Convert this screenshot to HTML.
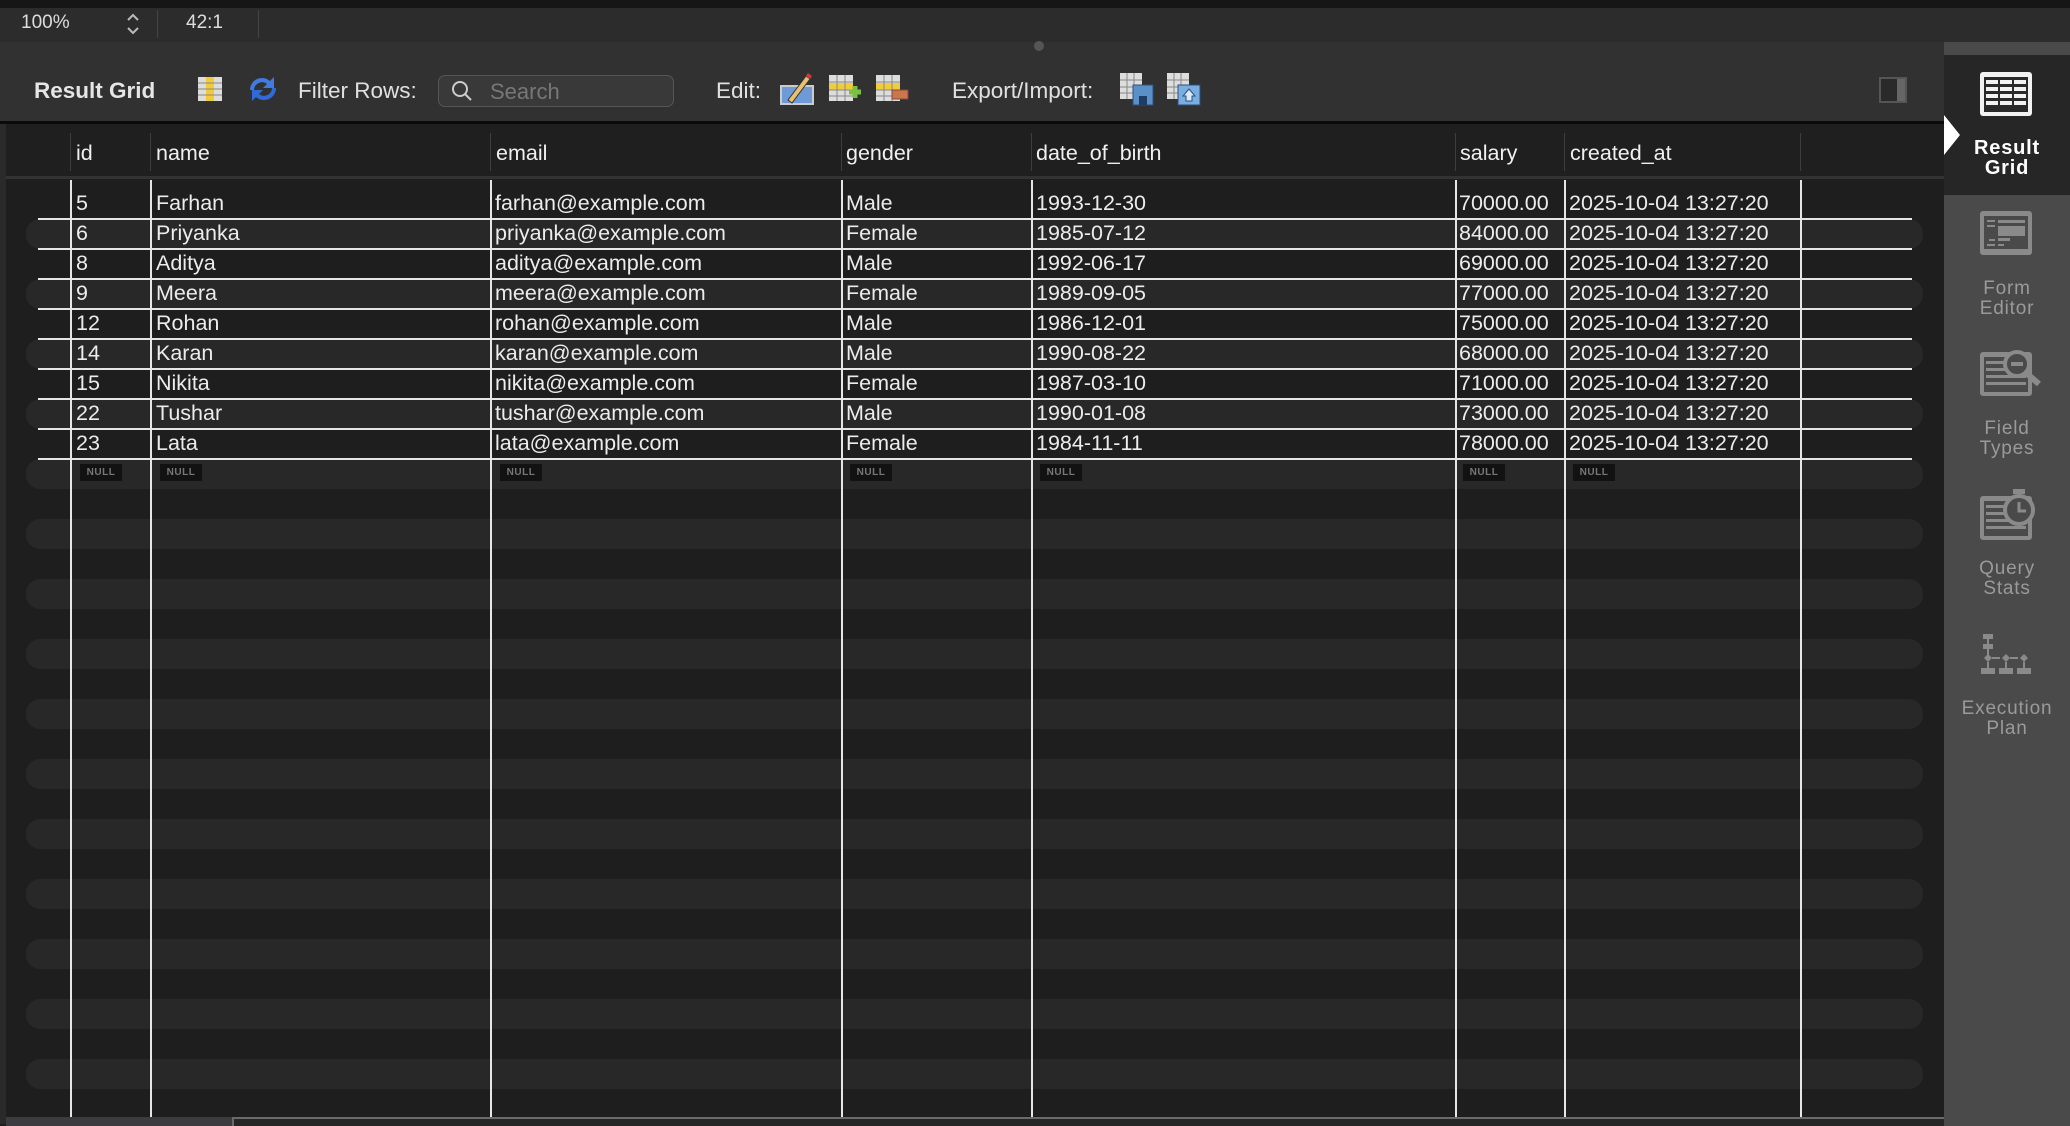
<!DOCTYPE html>
<html><head><meta charset="utf-8"><style>
*{margin:0;padding:0;box-sizing:border-box}
body{width:2070px;height:1126px;background:#1e1e1e;position:relative;overflow:hidden;font-family:"Liberation Sans",Arial,sans-serif;color:#e8e8e8}
.a{position:absolute}
.t{position:absolute;white-space:nowrap}
.cell{position:absolute;font-size:21.5px;color:#ececec;white-space:nowrap;line-height:30px}
.hd{position:absolute;font-size:21.5px;color:#f0f0f0;top:139px;line-height:28px}
.null{position:absolute;background:#121212;color:#777;font-size:10px;font-weight:bold;width:42px;height:17px;line-height:17px;text-align:center;letter-spacing:0.5px}
.lab{position:absolute;left:1944px;width:126px;text-align:center;font-size:19px;color:#9a9a9a;line-height:20px;letter-spacing:0.8px}
</style></head><body>
<div class="a" style="left:0;top:0;width:2070px;height:8px;background:#161616"></div>
<div class="a" style="left:0;top:8px;width:2070px;height:34px;background:#2c2c2c"></div>
<div class="t" style="left:21px;top:12px;font-size:19px;color:#ddd">100%</div>
<svg class="a" style="left:125px;top:11px" width="16" height="26"><path d="M3 9 L8 4 L13 9 M3 17 L8 22 L13 17" stroke="#bbb" stroke-width="2" fill="none"/></svg>
<div class="a" style="left:157px;top:10px;width:1px;height:28px;background:#444"></div>
<div class="t" style="left:186px;top:12px;font-size:19px;color:#ddd">42:1</div>
<div class="a" style="left:258px;top:10px;width:1px;height:28px;background:#444"></div>
<div class="a" style="left:0;top:42px;width:1944px;height:80px;background:#313131"></div>
<div class="a" style="left:1034px;top:41px;width:10px;height:10px;border-radius:5px;background:#555"></div>
<div class="a" style="left:0;top:121px;width:1944px;height:3px;background:#0a0a0a"></div>
<div class="t" style="left:34px;top:78px;font-size:22.5px;font-weight:bold;color:#e6e6e6">Result Grid</div>
<svg class="a" style="left:197px;top:76px" width="26" height="26"><rect x="1" y="1" width="24" height="24" fill="#ddd"/><rect x="9" y="1" width="8" height="24" fill="#f0cc3a"/><g stroke="#888" stroke-width="1"><path d="M1 7H25M1 13H25M1 19H25"/></g></svg>
<svg class="a" style="left:246px;top:74px" width="34" height="30"><path d="M4 16 A12 12 0 0 1 24 7 L28 3 L28 14 L17 14 L21 10 A8 8 0 0 0 8 16Z" fill="#3f7be0"/><path d="M30 14 A12 12 0 0 1 10 23 L6 27 L6 16 L17 16 L13 20 A8 8 0 0 0 26 14Z" fill="#2f6ad8"/></svg>
<div class="t" style="left:298px;top:78px;font-size:22.5px;color:#e0e0e0">Filter Rows:</div>
<div class="a" style="left:438px;top:75px;width:236px;height:32px;border-radius:7px;background:#393939;border:1px solid #555"></div>
<svg class="a" style="left:450px;top:79px" width="24" height="24"><circle cx="10" cy="10" r="7" stroke="#ccc" stroke-width="2" fill="none"/><path d="M15 15 L21 21" stroke="#ccc" stroke-width="2"/></svg>
<div class="t" style="left:490px;top:79px;font-size:22px;color:#777">Search</div>
<div class="t" style="left:716px;top:78px;font-size:22.5px;color:#e0e0e0">Edit:</div>
<svg class="a" style="left:780px;top:72px" width="34" height="34"><rect x="1" y="14" width="32" height="18" fill="#6e9ad8" stroke="#ccc" stroke-width="2"/><path d="M8 28 L26 4 L30 7 L12 31 Z" fill="#e8c070" stroke="#333"/><path d="M26 4 L30 7 L32 4 L28 1Z" fill="#d33"/></svg>
<svg class="a" style="left:828px;top:74px" width="34" height="30"><rect x="1" y="1" width="24" height="26" fill="#ddd"/><rect x="1" y="9" width="24" height="7" fill="#f0cc3a"/><g stroke="#888"><path d="M1 8H25M1 16H25M1 22H25M9 1V27M17 1V27"/></g><path d="M21 18H33M27 12V24" stroke="#7ac043" stroke-width="5"/></svg>
<svg class="a" style="left:875px;top:74px" width="34" height="30"><rect x="1" y="1" width="24" height="26" fill="#ddd"/><rect x="1" y="9" width="24" height="7" fill="#f0cc3a"/><g stroke="#888"><path d="M1 8H25M1 16H25M1 22H25M9 1V27M17 1V27"/></g><rect x="17" y="16" width="16" height="9" fill="#c8784a" stroke="#844"/></svg>
<div class="t" style="left:952px;top:78px;font-size:22.5px;color:#e0e0e0">Export/Import:</div>
<svg class="a" style="left:1119px;top:72px" width="36" height="34"><rect x="1" y="1" width="22" height="26" fill="#ddd"/><g stroke="#888"><path d="M1 8H23M1 15H23M1 21H23M8 1V27M15 1V27"/></g><rect x="14" y="13" width="20" height="20" fill="#5b8fc8" stroke="#2a4f80"/><rect x="20" y="24" width="8" height="9" fill="#1f3c66"/></svg>
<svg class="a" style="left:1166px;top:72px" width="36" height="34"><rect x="1" y="1" width="22" height="26" fill="#ddd"/><g stroke="#888"><path d="M1 8H23M1 15H23M1 21H23M8 1V27M15 1V27"/></g><rect x="12" y="13" width="22" height="20" fill="#7aaee0" stroke="#2a4f80"/><path d="M23 17 L29 24 H26 V29 H20 V24 H17Z" fill="#dbe9f8" stroke="#2a4f80"/></svg>
<svg class="a" style="left:1879px;top:77px" width="28" height="26"><rect x="1" y="1" width="26" height="24" fill="#2a2a2a" stroke="#555" stroke-width="2"/><rect x="18" y="2" width="8" height="22" fill="#666"/></svg>
<div class="a" style="left:6px;top:124px;width:1938px;height:54px;background:#1f1f1f"></div>
<div class="a" style="left:6px;top:176px;width:1938px;height:3px;background:#333"></div>
<div class="a" style="left:0;top:124px;width:6px;height:1000px;background:#2a2a2a"></div>
<div class="a" style="left:70px;top:133px;width:1px;height:38px;background:#3e3e3e"></div>
<div class="a" style="left:150px;top:133px;width:1px;height:38px;background:#3e3e3e"></div>
<div class="a" style="left:490px;top:133px;width:1px;height:38px;background:#3e3e3e"></div>
<div class="a" style="left:841px;top:133px;width:1px;height:38px;background:#3e3e3e"></div>
<div class="a" style="left:1031px;top:133px;width:1px;height:38px;background:#3e3e3e"></div>
<div class="a" style="left:1455px;top:133px;width:1px;height:38px;background:#3e3e3e"></div>
<div class="a" style="left:1564px;top:133px;width:1px;height:38px;background:#3e3e3e"></div>
<div class="a" style="left:1800px;top:133px;width:1px;height:38px;background:#3e3e3e"></div>
<div class="hd" style="left:76px">id</div>
<div class="hd" style="left:156px">name</div>
<div class="hd" style="left:496px">email</div>
<div class="hd" style="left:846px">gender</div>
<div class="hd" style="left:1036px">date_of_birth</div>
<div class="hd" style="left:1460px">salary</div>
<div class="hd" style="left:1570px">created_at</div>
<div class="a" style="left:26px;top:219px;width:1897px;height:30px;border-radius:14px;background:#282828"></div>
<div class="a" style="left:26px;top:279px;width:1897px;height:30px;border-radius:14px;background:#282828"></div>
<div class="a" style="left:26px;top:339px;width:1897px;height:30px;border-radius:14px;background:#282828"></div>
<div class="a" style="left:26px;top:399px;width:1897px;height:30px;border-radius:14px;background:#282828"></div>
<div class="a" style="left:26px;top:459px;width:1897px;height:30px;border-radius:14px;background:#282828"></div>
<div class="a" style="left:26px;top:519px;width:1897px;height:30px;border-radius:14px;background:#282828"></div>
<div class="a" style="left:26px;top:579px;width:1897px;height:30px;border-radius:14px;background:#282828"></div>
<div class="a" style="left:26px;top:639px;width:1897px;height:30px;border-radius:14px;background:#282828"></div>
<div class="a" style="left:26px;top:699px;width:1897px;height:30px;border-radius:14px;background:#282828"></div>
<div class="a" style="left:26px;top:759px;width:1897px;height:30px;border-radius:14px;background:#282828"></div>
<div class="a" style="left:26px;top:819px;width:1897px;height:30px;border-radius:14px;background:#282828"></div>
<div class="a" style="left:26px;top:879px;width:1897px;height:30px;border-radius:14px;background:#282828"></div>
<div class="a" style="left:26px;top:939px;width:1897px;height:30px;border-radius:14px;background:#282828"></div>
<div class="a" style="left:26px;top:999px;width:1897px;height:30px;border-radius:14px;background:#282828"></div>
<div class="a" style="left:26px;top:1059px;width:1897px;height:30px;border-radius:14px;background:#282828"></div>
<div class="a" style="left:38px;top:218px;width:1874px;height:2px;background:#e6e6e6"></div>
<div class="a" style="left:38px;top:248px;width:1874px;height:2px;background:#e6e6e6"></div>
<div class="a" style="left:38px;top:278px;width:1874px;height:2px;background:#e6e6e6"></div>
<div class="a" style="left:38px;top:308px;width:1874px;height:2px;background:#e6e6e6"></div>
<div class="a" style="left:38px;top:338px;width:1874px;height:2px;background:#e6e6e6"></div>
<div class="a" style="left:38px;top:368px;width:1874px;height:2px;background:#e6e6e6"></div>
<div class="a" style="left:38px;top:398px;width:1874px;height:2px;background:#e6e6e6"></div>
<div class="a" style="left:38px;top:428px;width:1874px;height:2px;background:#e6e6e6"></div>
<div class="a" style="left:38px;top:458px;width:1874px;height:2px;background:#e6e6e6"></div>
<div class="a" style="left:70px;top:180px;width:2px;height:937px;background:#e6e6e6"></div>
<div class="a" style="left:150px;top:180px;width:2px;height:937px;background:#e6e6e6"></div>
<div class="a" style="left:490px;top:180px;width:2px;height:937px;background:#e6e6e6"></div>
<div class="a" style="left:841px;top:180px;width:2px;height:937px;background:#e6e6e6"></div>
<div class="a" style="left:1031px;top:180px;width:2px;height:937px;background:#e6e6e6"></div>
<div class="a" style="left:1455px;top:180px;width:2px;height:937px;background:#e6e6e6"></div>
<div class="a" style="left:1564px;top:180px;width:2px;height:937px;background:#e6e6e6"></div>
<div class="a" style="left:1800px;top:180px;width:2px;height:937px;background:#e6e6e6"></div>
<div class="a" style="left:0;top:188px">
<div class="cell" style="left:76px;top:0">5</div><div class="cell" style="left:156px;top:0">Farhan</div><div class="cell" style="left:495px;top:0">farhan@example.com</div><div class="cell" style="left:846px;top:0">Male</div><div class="cell" style="left:1036px;top:0">1993-12-30</div><div class="cell" style="left:1459px;top:0">70000.00</div><div class="cell" style="left:1569px;top:0">2025-10-04 13:27:20</div>
<div class="cell" style="left:76px;top:30px">6</div><div class="cell" style="left:156px;top:30px">Priyanka</div><div class="cell" style="left:495px;top:30px">priyanka@example.com</div><div class="cell" style="left:846px;top:30px">Female</div><div class="cell" style="left:1036px;top:30px">1985-07-12</div><div class="cell" style="left:1459px;top:30px">84000.00</div><div class="cell" style="left:1569px;top:30px">2025-10-04 13:27:20</div>
<div class="cell" style="left:76px;top:60px">8</div><div class="cell" style="left:156px;top:60px">Aditya</div><div class="cell" style="left:495px;top:60px">aditya@example.com</div><div class="cell" style="left:846px;top:60px">Male</div><div class="cell" style="left:1036px;top:60px">1992-06-17</div><div class="cell" style="left:1459px;top:60px">69000.00</div><div class="cell" style="left:1569px;top:60px">2025-10-04 13:27:20</div>
<div class="cell" style="left:76px;top:90px">9</div><div class="cell" style="left:156px;top:90px">Meera</div><div class="cell" style="left:495px;top:90px">meera@example.com</div><div class="cell" style="left:846px;top:90px">Female</div><div class="cell" style="left:1036px;top:90px">1989-09-05</div><div class="cell" style="left:1459px;top:90px">77000.00</div><div class="cell" style="left:1569px;top:90px">2025-10-04 13:27:20</div>
<div class="cell" style="left:76px;top:120px">12</div><div class="cell" style="left:156px;top:120px">Rohan</div><div class="cell" style="left:495px;top:120px">rohan@example.com</div><div class="cell" style="left:846px;top:120px">Male</div><div class="cell" style="left:1036px;top:120px">1986-12-01</div><div class="cell" style="left:1459px;top:120px">75000.00</div><div class="cell" style="left:1569px;top:120px">2025-10-04 13:27:20</div>
<div class="cell" style="left:76px;top:150px">14</div><div class="cell" style="left:156px;top:150px">Karan</div><div class="cell" style="left:495px;top:150px">karan@example.com</div><div class="cell" style="left:846px;top:150px">Male</div><div class="cell" style="left:1036px;top:150px">1990-08-22</div><div class="cell" style="left:1459px;top:150px">68000.00</div><div class="cell" style="left:1569px;top:150px">2025-10-04 13:27:20</div>
<div class="cell" style="left:76px;top:180px">15</div><div class="cell" style="left:156px;top:180px">Nikita</div><div class="cell" style="left:495px;top:180px">nikita@example.com</div><div class="cell" style="left:846px;top:180px">Female</div><div class="cell" style="left:1036px;top:180px">1987-03-10</div><div class="cell" style="left:1459px;top:180px">71000.00</div><div class="cell" style="left:1569px;top:180px">2025-10-04 13:27:20</div>
<div class="cell" style="left:76px;top:210px">22</div><div class="cell" style="left:156px;top:210px">Tushar</div><div class="cell" style="left:495px;top:210px">tushar@example.com</div><div class="cell" style="left:846px;top:210px">Male</div><div class="cell" style="left:1036px;top:210px">1990-01-08</div><div class="cell" style="left:1459px;top:210px">73000.00</div><div class="cell" style="left:1569px;top:210px">2025-10-04 13:27:20</div>
<div class="cell" style="left:76px;top:240px">23</div><div class="cell" style="left:156px;top:240px">Lata</div><div class="cell" style="left:495px;top:240px">lata@example.com</div><div class="cell" style="left:846px;top:240px">Female</div><div class="cell" style="left:1036px;top:240px">1984-11-11</div><div class="cell" style="left:1459px;top:240px">78000.00</div><div class="cell" style="left:1569px;top:240px">2025-10-04 13:27:20</div>
</div>
<div class="null" style="left:80px;top:464px">NULL</div>
<div class="null" style="left:160px;top:464px">NULL</div>
<div class="null" style="left:500px;top:464px">NULL</div>
<div class="null" style="left:850px;top:464px">NULL</div>
<div class="null" style="left:1040px;top:464px">NULL</div>
<div class="null" style="left:1463px;top:464px">NULL</div>
<div class="null" style="left:1573px;top:464px">NULL</div>
<div class="a" style="left:6px;top:1117px;width:226px;height:9px;background:#3c3c40"></div>
<div class="a" style="left:232px;top:1117px;width:1712px;height:9px;background:#262626;border-top:2px solid #6a6a66;border-left:2px solid #6a6a66"></div>
<div class="a" style="left:1944px;top:42px;width:126px;height:1084px;background:#4a4a4a"></div>
<div class="a" style="left:1944px;top:55px;width:126px;height:140px;background:#262626"></div>
<svg class="a" style="left:1944px;top:115px" width="18" height="40"><path d="M0 0 L16 20 L0 40Z" fill="#fff"/></svg>
<svg class="a" style="left:1979px;top:71px" width="54" height="46"><rect x="1" y="1" width="52" height="44" rx="3" fill="#f2f2f2"/><rect x="5" y="6" width="44" height="35" fill="#2a2a2a"/><g fill="#f2f2f2"><rect x="7" y="9" width="12" height="4"/><rect x="21" y="9" width="12" height="4"/><rect x="35" y="9" width="12" height="4"/><rect x="7" y="16" width="12" height="4"/><rect x="21" y="16" width="12" height="4"/><rect x="35" y="16" width="12" height="4"/><rect x="7" y="23" width="12" height="4"/><rect x="21" y="23" width="12" height="4"/><rect x="35" y="23" width="12" height="4"/><rect x="7" y="30" width="12" height="4"/><rect x="21" y="30" width="12" height="4"/><rect x="35" y="30" width="12" height="4"/></g></svg>
<div class="lab" style="top:138px;color:#fff;font-weight:bold;font-size:20px">Result<br>Grid</div>
<svg class="a" style="left:1979px;top:210px" width="54" height="46"><rect x="1" y="1" width="52" height="44" rx="3" fill="#8a8a8a"/><rect x="5" y="6" width="44" height="33" fill="#4a4a4a"/><g fill="#8a8a8a"><rect x="8" y="10" width="8" height="2"/><rect x="19" y="10" width="27" height="3"/><rect x="8" y="15" width="8" height="2"/><rect x="19" y="16" width="27" height="10"/><rect x="10" y="29" width="6" height="2"/><rect x="19" y="28" width="12" height="3"/><rect x="8" y="34" width="8" height="2"/><rect x="19" y="34" width="6" height="2"/></g></svg>
<div class="lab" style="top:279px">Form<br>Editor</div>
<svg class="a" style="left:1979px;top:348px" width="64" height="54"><rect x="1" y="4" width="52" height="44" rx="3" fill="#8a8a8a"/><rect x="5" y="9" width="44" height="35" fill="#4a4a4a"/><g fill="#8a8a8a"><rect x="7" y="13" width="40" height="3"/><rect x="7" y="20" width="40" height="3"/><rect x="7" y="27" width="40" height="3"/><rect x="7" y="34" width="40" height="3"/></g><circle cx="38" cy="16" r="12" fill="#4a4a4a" stroke="#8a8a8a" stroke-width="4"/><rect x="32" y="14" width="12" height="4" fill="#8a8a8a"/><path d="M46 24 L60 36" stroke="#8a8a8a" stroke-width="6"/></svg>
<div class="lab" style="top:419px">Field<br>Types</div>
<svg class="a" style="left:1979px;top:488px" width="60" height="56"><rect x="1" y="8" width="52" height="44" rx="3" fill="#8a8a8a"/><rect x="5" y="13" width="44" height="35" fill="#4a4a4a"/><g fill="#8a8a8a"><rect x="7" y="17" width="40" height="3"/><rect x="7" y="24" width="40" height="3"/><rect x="7" y="31" width="40" height="3"/><rect x="7" y="38" width="40" height="3"/></g><rect x="34" y="1" width="12" height="5" fill="#8a8a8a"/><circle cx="40" cy="22" r="14" fill="#4a4a4a" stroke="#8a8a8a" stroke-width="4"/><path d="M40 14 V23 H47" stroke="#8a8a8a" stroke-width="3" fill="none"/></svg>
<div class="lab" style="top:559px">Query<br>Stats</div>
<svg class="a" style="left:1980px;top:632px" width="54" height="48"><g fill="#8a8a8a"><rect x="3" y="2" width="10" height="5"/><rect x="7" y="7" width="2" height="5"/><rect x="3" y="12" width="10" height="5"/><rect x="7" y="17" width="2" height="8"/><path d="M8 22 L12 26 L8 30 L4 26Z"/><rect x="12" y="25" width="8" height="2"/><path d="M26 22 L30 26 L26 30 L22 26Z"/><rect x="30" y="25" width="8" height="2"/><path d="M44 22 L48 26 L44 30 L40 26Z"/><rect x="7" y="30" width="2" height="6"/><rect x="25" y="30" width="2" height="6"/><rect x="43" y="30" width="2" height="6"/><rect x="1" y="36" width="14" height="6"/><rect x="19" y="36" width="14" height="6"/><rect x="37" y="36" width="14" height="6"/></g></svg>
<div class="lab" style="top:699px">Execution<br>Plan</div>
</body></html>
